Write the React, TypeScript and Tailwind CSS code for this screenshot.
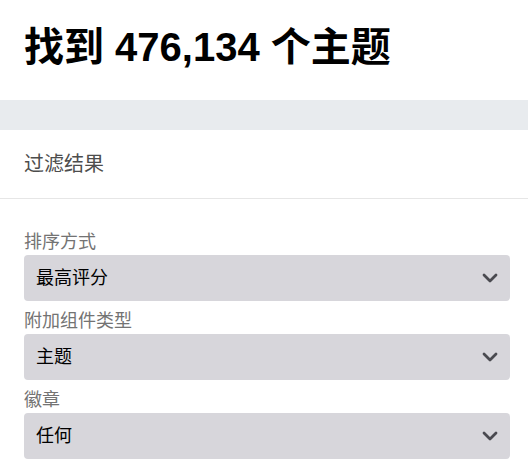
const fields = [
  { label: '排序方式', value: '最高评分' },
  { label: '附加组件类型', value: '主题' },
  { label: '徽章', value: '任何' },
];

const Chevron = () => (
  <svg width="16" height="10" viewBox="0 0 16 10" className="text-[#4a4a50]">
    <polyline points="2,2 8,8 14,2" fill="none" stroke="currentColor" strokeWidth="2.8" strokeLinecap="round" strokeLinejoin="round" />
  </svg>
);

export default function App() {
  return (
    <div className="w-[528px] h-[476px] overflow-hidden bg-white font-['Liberation_Sans','Noto_Sans_CJK_SC',sans-serif]">
      {/* header */}
      <div className="h-[100px] pl-6 pt-[23px]">
        <h1 className="text-[40px] leading-[48px] font-bold text-black">找到 476,134 个主题</h1>
      </div>

      <div className="h-[30px] bg-[#e8ebee]" />

      {/* filter heading */}
      <div className="h-[69px] flex items-center pl-6 border-b border-[#e6e6e6]">
        <span className="text-[20px] text-[#4d4d4d]">过滤结果</span>
      </div>

      {/* filters */}
      <div className="pl-6 pr-[18px] pt-[31px] flex flex-col gap-2">
        {fields.map((f) => (
          <div key={f.label} className="flex flex-col">
            <label className="text-[18px] leading-[25px] text-[#737373]">{f.label}</label>
            <div className="h-[46px] rounded bg-[#d7d6db] flex items-center justify-between pl-3 pr-[12px]">
              <span className="text-[18px] text-black">{f.value}</span>
              <Chevron />
            </div>
          </div>
        ))}
      </div>
    </div>
  );
}
